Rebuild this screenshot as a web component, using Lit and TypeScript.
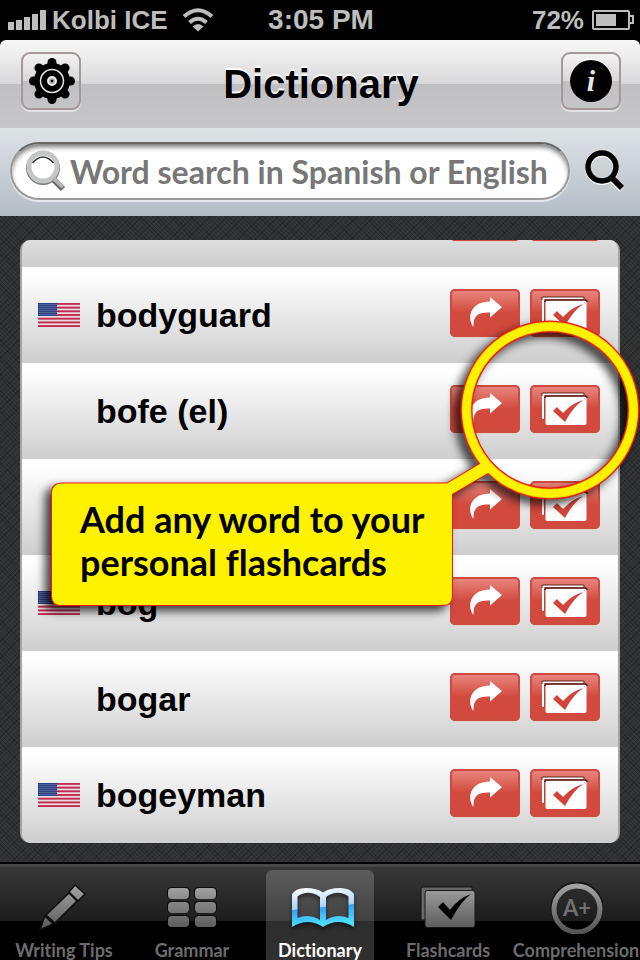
import { LitElement, html, css, svg, nothing } from "lit";
import { customElement, property, state } from "lit/decorators.js";
import { classMap } from "lit/directives/class-map.js";

interface Entry {
  word: string;
  english: boolean;
}

const ENTRIES: Entry[] = [
  { word: "", english: false },
  { word: "bodyguard", english: true },
  { word: "bofe (el)", english: false },
  { word: "", english: false },
  { word: "bog", english: true },
  { word: "bogar", english: false },
  { word: "bogeyman", english: true },
];

const CHECK = "M23 26 L27 22 L33 28 Q42 18 53 15 Q43 22 35 37 Z";

@customElement("status-bar")
class StatusBar extends LitElement {
  static styles = css`
    :host {
      display: grid;
      grid-template-columns: 1fr auto 1fr;
      align-items: center;
      height: 40px;
      padding: 0 6px 0 8px;
      background: #000;
      color: #bdbdbd;
      font: bold 26px "Liberation Sans", Arial, sans-serif;
      white-space: nowrap;
    }
    svg { display: block; }
    .left, .right { display: flex; align-items: center; }
    .left { gap: 6px; }
    .wifi { margin-left: 8px; }
    .right { justify-content: flex-end; gap: 8px; }
    .time { font-size: 28px; }
  `;
  render() {
    return html`
      <div class="left">
        <svg width="38" height="20" viewBox="0 0 38 20" fill="#bdbdbd">
          <path d="M0 12h6v8H0zM8 10h6v10H8zM16 7h6v13h-6zM24 4h6v16h-6zM32 0h6v20h-6z" />
        </svg>
        <span>Kolbi ICE</span>
        <svg class="wifi" width="32" height="24" viewBox="0 0 32 24" fill="none" stroke="#bdbdbd" stroke-width="4">
          <path d="M2 8.500Q16 -4 30 8.500M7.500 14.500Q16 7 24.500 14.500" />
          <path d="M10.500 18.500Q16 13.500 21.500 18.500L16 23.500Z" fill="#bdbdbd" stroke="none" />
        </svg>
      </div>
      <span class="time">3:05 PM</span>
      <div class="right">
        <span>72%</span>
        <svg width="42" height="20" viewBox="0 0 42 20" fill="none" stroke="#bdbdbd" stroke-width="2">
          <rect x="1" y="1" width="36" height="18" rx="1" />
          <path d="M37 6h4v7h-4" />
          <path d="M4 4h20v12H4z" fill="#bdbdbd" stroke="none" />
        </svg>
      </div>
    `;
  }
}

@customElement("title-bar")
class TitleBar extends LitElement {
  static styles = css`
    :host { display: block; background: #000; }
    .bar {
      display: grid;
      grid-template-columns: 60px 1fr 60px;
      align-items: center;
      height: 88px;
      padding: 0 19px 0 21px;
      box-sizing: border-box;
      border-radius: 6px 6px 0 0;
      background: linear-gradient(#f8f8f8, #d8d8da 50%, #bfbfc2 50%, #c7c7c9);
    }
    h1 {
      margin: 0;
      text-align: center;
      font: bold 40px "Liberation Sans", Arial, sans-serif;
      color: #000;
      text-shadow: 0 -2px 1px #fff;
    }
    button {
      display: grid;
      place-items: center;
      height: 58px;
      margin-bottom: 6px;
      padding: 0;
      border: 2px solid #a39898;
      border-radius: 9px;
      background: linear-gradient(#f2f2f3, #d8d8da 50%, #c0c0c3 50%, #c5c5c8);
      box-shadow: 0 2px 1px #e4e4e6;
    }
    svg { display: block; }
    .info {
      display: grid;
      place-items: center;
      width: 42px;
      height: 42px;
      border-radius: 50%;
      background: #000;
      box-shadow: 0 -1px 1px #fff;
      color: #e6e6e6;
      font: italic bold 30px/36px "Liberation Serif", serif;
    }
  `;
  render() {
    const teeth = [0, 45, 90, 135, 180, 225, 270, 315];
    return html`
      <div class="bar">
        <button aria-label="Settings">
          <svg width="48" height="48" viewBox="-25 -24 48 48">
            <g stroke="#000" stroke-width="9" stroke-linecap="round">
              ${teeth.map((a) => svg`<path d="M0 -12V-18.500" transform=${`rotate(${a})`} />`)}
            </g>
            <circle r="18" />
            <circle r="11.500" fill="none" stroke="#e6e6e6" stroke-width="1.500" />
            <circle r="4" fill="#aaa" stroke="#eee" stroke-width="2" />
            <circle r="1.200" />
          </svg>
        </button>
        <h1>Dictionary</h1>
        <button aria-label="Information"><span class="info">i</span></button>
      </div>
    `;
  }
}

@customElement("search-bar")
class SearchBar extends LitElement {
  static styles = css`
    :host {
      display: flex;
      align-items: center;
      gap: 12px;
      height: 88px;
      padding: 0 16px 0 10px;
      box-sizing: border-box;
      background: linear-gradient(#dfe3e6, #b3bdc6);
    }
    .field {
      flex: 1;
      min-width: 0;
      display: flex;
      align-items: center;
      gap: 4px;
      height: 58px;
      margin-bottom: 2px;
      padding: 0 14px;
      box-sizing: border-box;
      border: 2px solid #999;
      border-top-color: #666;
      border-radius: 29px;
      background: #fff;
      box-shadow: inset 0 4px 5px -1px #777, 0 2px 1px #e8ecef;
    }
    svg { display: block; flex: none; }
    input {
      flex: 1;
      min-width: 0;
      padding: 0;
      border: 0;
      outline: 0;
      background: none;
      font: bold 32px Lato, sans-serif;
      font-variant-ligatures: none;
      color: #333;
    }
    input::placeholder { color: #777; opacity: 1; }
    button { padding: 0; border: 0; background: none; }
  `;
  render() {
    return html`
      <label class="field">
        <svg width="40" height="44" viewBox="0 0 40 44" fill="none">
          <circle cx="17" cy="19" r="15" stroke="#777" stroke-width="4" />
          <path d="M28 31L37 40" stroke="#666" stroke-width="6" />
          <circle cx="17" cy="18" r="14" stroke="#c4c6c8" stroke-width="5" />
          <path d="M27 29L37 38" stroke="#b2b4b6" stroke-width="4" />
          <path d="M6.500 14Q17 2 27.500 14" stroke="#333" stroke-width="1.500" />
        </svg>
        <input type="text" aria-label="Search" placeholder="Word search in Spanish or English" />
      </label>
      <button aria-label="Search">
        <svg width="42" height="44" viewBox="0 0 42 44" fill="none">
          <g stroke="#fff" transform="translate(0 1)">
            <circle cx="20" cy="17" r="14" stroke-width="6" />
            <path d="M30 28L40 38" stroke-width="7" />
          </g>
          <g stroke="#000">
            <circle cx="20" cy="17" r="14" stroke-width="5.500" />
            <path d="M29 27L40 38" stroke-width="6" />
          </g>
        </svg>
      </button>
    `;
  }
}

@customElement("word-row")
class WordRow extends LitElement {
  @property() word = "";
  @property({ type: Boolean }) english = false;

  static styles = css`
    :host {
      display: grid;
      grid-template-columns: 42px 1fr auto;
      align-items: center;
      height: 96px;
      padding: 0 18px 0 16px;
      box-sizing: border-box;
      background: linear-gradient(#fff 8%, #cecece);
      font: bold 34px "Liberation Sans", Arial, sans-serif;
      color: #000;
    }
    svg { display: block; }
    .word { margin-left: 16px; white-space: nowrap; }
    .actions { display: flex; gap: 10px; margin-bottom: 4px; }
    button {
      width: 70px;
      height: 48px;
      padding: 0;
      border: 0;
      border-radius: 5px;
      background: linear-gradient(#ea8b83, #d2493d 50%);
      box-shadow: inset 0 0 0 2px #cd4b40, 0 1px 1px #e9d0ce;
    }
  `;
  render() {
    return html`
      <span>${this.english ? this.flag() : nothing}</span>
      <span class="word">${this.word}</span>
      <div class="actions">
        <button aria-label="Share">
          <svg width="70" height="48" viewBox="0 0 70 48" fill="#fff">
            <path d="M40 8L52 18L40 28.500V23.500C28 23 23 27 23.500 38C17 30 19 13 40 12.500Z" />
          </svg>
        </button>
        <button aria-label="Add to flashcards">
          <svg width="70" height="48" viewBox="0 0 70 48">
            <path d="M13 34V9H54" fill="none" stroke="#fff" stroke-width="2" />
            <path d="M12 11V8H54V10" fill="none" stroke="#5d2521" />
            <path d="M15 34V12" stroke="#9d3a33" />
            <rect x="15.500" y="11.500" width="41" height="28.500" rx="2" fill="#fff" />
            <path d="M15 13Q15 11 17 11H55Q57 11 57 13" fill="none" stroke="#4b1f1c" stroke-width="1.500" />
            <path d=${CHECK} fill="#cf453a" />
          </svg>
        </button>
      </div>
    `;
  }
  private flag() {
    const stars = [];
    for (let r = 0; r < 6; r++) {
      for (let c = 0; c < 9; c++) {
        stars.push(svg`<circle cx=${2 + c * 2} cy=${1.5 + r * 2} r=".5" />`);
      }
    }
    return html`
      <svg width="42" height="24" viewBox="0 0 42 24" role="img" aria-label="English">
        <rect width="42" height="24" fill="#e8d9de" />
        <g fill="#c0284c">
          ${[0, 2, 4, 6, 8, 10, 12].map(
            (i) => svg`<rect y=${(i * 24) / 13} width="42" height=${24 / 13} />`,
          )}
        </g>
        <rect width="19" height="13" fill="#2c4283" />
        <g fill="#8e9bc4">${stars}</g>
      </svg>
    `;
  }
}

@customElement("help-callout")
class HelpCallout extends LitElement {
  static styles = css`
    :host {
      display: block;
      position: relative;
      width: 600px;
      height: 310px;
      pointer-events: none;
    }
    svg {
      position: absolute;
      inset: 0;
      filter: drop-shadow(-6px 5px 5px rgba(0, 0, 0, 0.75));
    }
    p {
      position: absolute;
      left: 40px;
      bottom: 36px;
      margin: 0;
      font: bold 36px/43px Lato, sans-serif;
      font-variant-ligatures: none;
      color: #000;
      white-space: nowrap;
    }
  `;
  render() {
    const bubble =
      "M22 173.500H407L444 151.500L453 160L412 184V286Q412 295 403 295H21Q12 295 12 286V183Q12 173.500 22 173.500Z";
    return html`
      <svg width="600" height="310" viewBox="0 0 600 310">
        <path d=${bubble} fill="#fff200" stroke="#f21818" stroke-width="2" />
        <circle cx="510" cy="100" r="83.500" fill="none" stroke="#f21818" stroke-width="12" />
        <circle cx="510" cy="100" r="83.500" fill="none" stroke="#d8c800" stroke-width="9.500" />
        <path d=${bubble} fill="#fff200" />
        <circle cx="510" cy="100" r="83.500" fill="none" stroke="#fff200" stroke-width="8" />
      </svg>
      <p>Add any word to your<br />personal flashcards</p>
    `;
  }
}

@customElement("tab-bar")
class TabBar extends LitElement {
  @state() private active = "Dictionary";

  static styles = css`
    :host {
      display: grid;
      grid-template-columns: repeat(5, minmax(0, 1fr));
      height: 98px;
      box-sizing: border-box;
      border-top: 2px solid #000;
      background: linear-gradient(#484848 0 3px, #383838 3px, #1c1c1c 57px, #000 57px);
      font: bold 18px/22px Lato, sans-serif;
      font-variant-ligatures: none;
    }
    a {
      display: flex;
      flex-direction: column;
      align-items: center;
      gap: 5px;
      margin: 6px 10px 0;
      padding-top: 12px;
      border-radius: 6px 6px 0 0;
      color: #6c6c6c;
      text-decoration: none;
      white-space: nowrap;
    }
    a.on {
      color: #fff;
      background: linear-gradient(#5c5c5c, #414141 51px, #2e2e2e 51px, #303030);
    }
    svg { display: block; flex: none; }
    .on svg { filter: drop-shadow(0 3px 2px rgba(0, 0, 0, 0.5)); }
  `;
  private icons: Record<string, unknown> = {
    "Writing Tips": svg`
      <g fill="url(#g)" stroke="#0c0c0c" stroke-width="1.500" transform="translate(6)">
        <path d="M39 3L49 12L42 19L33 10Z" />
        <path d="M33 11L41 19L19 41L10 33Z" />
        <path d="M9 34L17 42L4 48L7 39Z" />
      </g>`,
    Grammar: svg`
      <g transform="translate(6)">
        <g fill="#0c0c0c">${[5, 19, 33].map((y) => svg`<rect x="3" y=${y} width="23" height="12" rx="4" /><rect x="30" y=${y} width="23" height="12" rx="4" />`)}</g>
        <g fill="url(#g)">${[6, 20, 34].map((y) => svg`<rect x="4" y=${y} width="21" height="11" rx="4" /><rect x="31" y=${y} width="21" height="11" rx="4" />`)}</g>
      </g>`,
    Dictionary: svg`
      <path transform="translate(6)" fill="url(#b)" fill-rule="evenodd" d="M0 12Q4 6 14 6Q25 6 31 10.500Q37 6 48 6Q58 6 62 12V45Q46 35 31 45Q16 35 0 45ZM5.500 14.500Q16 7 28 15V38Q17 31 5.500 36ZM56.500 14.500Q46 7 34 15V38Q45 31 56.500 36Z" />`,
    Flashcards: svg`
      <g transform="translate(6)">
        <path d="M1 38V7Q1 5 3 5H52V9H6V38Z" fill="#686868" stroke="#111" />
        <rect x="5" y="8.500" width="50" height="37" rx="2.500" fill="url(#g)" stroke="#181818" />
        <path d="M18 25L23 20L30 28Q39 16 51 12Q41 19 31 38Z" fill="#000" />
      </g>`,
    Comprehension: svg`
      <circle cx="35" cy="26" r="24" fill="none" stroke="#151515" stroke-width="5" />
      <circle cx="35" cy="27" r="23" fill="none" stroke="url(#g)" stroke-width="5" />
      <text x="35" y="34" text-anchor="middle" font-family="Lato, sans-serif" font-weight="700" font-size="22" fill="#707070">A+</text>`,
  };
  render() {
    return html`${Object.keys(this.icons).map((name) => {
      const on = name === this.active;
      return html`
        <a
          href="#"
          class=${classMap({ on })}
          aria-current=${on ? "page" : nothing}
          @click=${(e: Event) => {
            e.preventDefault();
            this.active = name;
          }}
        >
          <svg width="68" height="52" viewBox="0 0 68 52">
            <defs>
              <linearGradient id="g" gradientUnits="userSpaceOnUse" x1="0" y1="4" x2="0" y2="50">
                <stop offset="0" stop-color="#a2a2a2" />
                <stop offset="1" stop-color="#555" />
              </linearGradient>
              <linearGradient id="b" x1="0" y1="0" x2=".15" y2="1">
                <stop offset="0" stop-color="#fff" />
                <stop offset=".54" stop-color="#a9d4f8" />
                <stop offset=".56" stop-color="#36a0fb" />
                <stop offset="1" stop-color="#4ee0fd" />
              </linearGradient>
            </defs>
            ${this.icons[name]}
          </svg>
          <span>${name}</span>
        </a>
      `;
    })}`;
  }
}

@customElement("app-root")
class AppRoot extends LitElement {
  static styles = css`
    :host {
      display: flex;
      flex-direction: column;
      height: 100vh;
      overflow: hidden;
      background: #000;
    }
    main {
      flex: 1;
      min-height: 0;
      display: flex;
      position: relative;
      padding: 24px 20px 19px;
      background:
        repeating-linear-gradient(45deg, rgba(0, 0, 0, 0.16) 0 1px, transparent 1px 3px),
        repeating-linear-gradient(-45deg, rgba(0, 0, 0, 0.16) 0 1px, transparent 1px 4px),
        #343537;
    }
    .list {
      flex: 1;
      display: flex;
      flex-direction: column;
      justify-content: flex-end;
      margin: 0;
      padding: 0;
      list-style: none;
      overflow: hidden;
      border: solid #a4a4a4;
      border-width: 0 2px;
      border-radius: 10px;
      background: #cecece;
    }
    .list li { flex: none; }
    help-callout {
      position: absolute;
      top: 94px;
      right: 0;
    }
  `;
  render() {
    return html`
      <status-bar></status-bar>
      <title-bar></title-bar>
      <search-bar></search-bar>
      <main>
        <ul class="list">
          ${ENTRIES.map(
            (e) => html`<li><word-row .word=${e.word} ?english=${e.english}></word-row></li>`,
          )}
        </ul>
        <help-callout></help-callout>
      </main>
      <tab-bar></tab-bar>
    `;
  }
}
